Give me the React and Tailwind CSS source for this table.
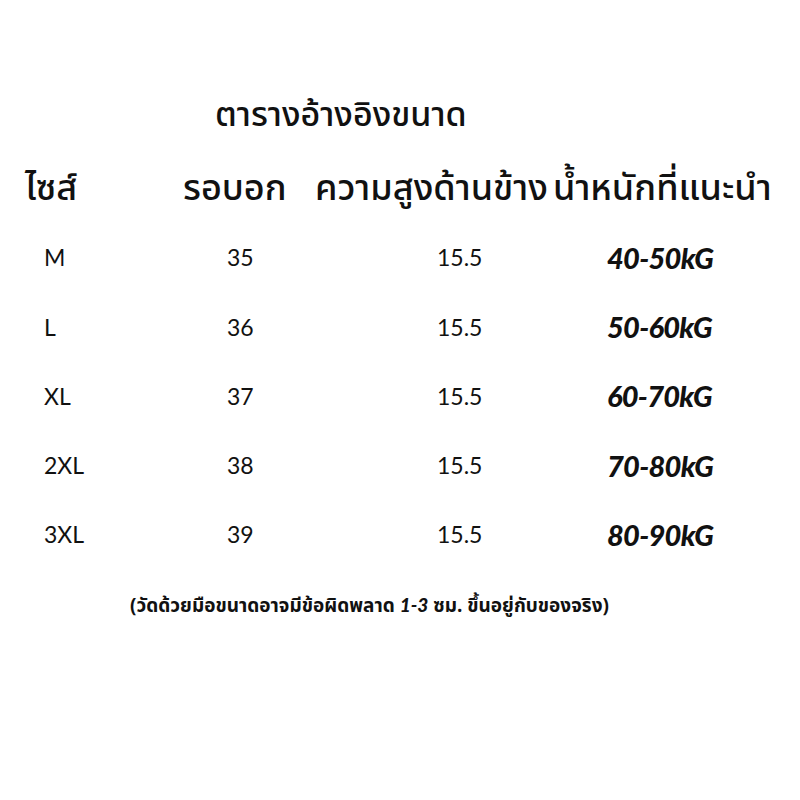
import React from 'react'

const rows = [
  { size: 'M', chest: '35', side: '15.5', weight: '40-50kG' },
  { size: 'L', chest: '36', side: '15.5', weight: '50-60kG' },
  { size: 'XL', chest: '37', side: '15.5', weight: '60-70kG' },
  { size: '2XL', chest: '38', side: '15.5', weight: '70-80kG' },
  { size: '3XL', chest: '39', side: '15.5', weight: '80-90kG' },
]

const thai = { fontFamily: '"Noto Sans Thai", "Noto Sans", "DejaVu Sans", sans-serif' }
const num = { fontFamily: 'Lato, "Open Sans", sans-serif' }

export default function App() {
  return (
    <div className="w-[800px] h-[800px] bg-white text-[#111] relative overflow-hidden">
      <div className="pt-[92px] pl-[215px] text-[34px] font-medium leading-[48px]" style={thai}>
        ตารางอ้างอิงขนาด
      </div>

      <div className="flex items-center mt-[21px] h-[56px] text-[36px] font-medium whitespace-nowrap" style={thai}>
        <span className="pl-[25px] w-[183px]">ไซส์</span>
        <span className="w-[132px]">รอบอก</span>
        <span className="w-[238px]">ความสูงด้านข้าง</span>
        <span>น้ำหนักที่แนะนำ</span>
      </div>

      <div className="flex flex-col mt-[6px]">
        {rows.map((r) => (
          <div key={r.size} className="flex items-center h-[69.25px] text-[23px]" style={num}>
            <span className="pl-[44px] w-[227px]">{r.size}</span>
            <span className="w-[210px]">{r.chest}</span>
            <span className="w-[170px]">{r.side}</span>
            <span className="text-[29px] font-black italic tracking-tight">{r.weight}</span>
          </div>
        ))}
      </div>

      <div className="mt-[22px] pl-[130px] text-[19px] font-bold whitespace-nowrap" style={thai}>
        (วัดด้วยมือขนาดอาจมีข้อผิดพลาด <span className="italic font-black" style={num}>1-3</span> ซม. ขึ้นอยู่กับของจริง)
      </div>
    </div>
  )
}
